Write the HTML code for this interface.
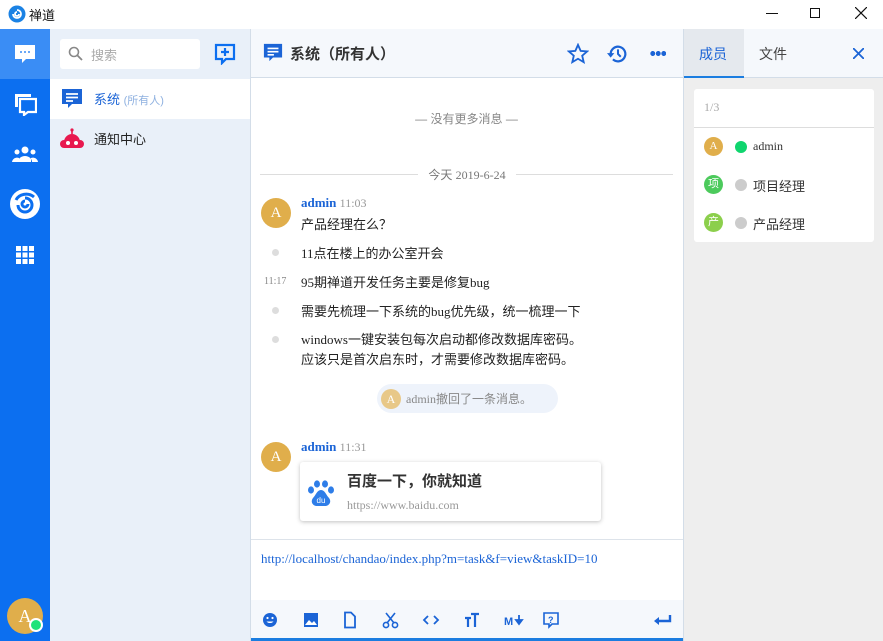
<!DOCTYPE html><html><head><meta charset="utf-8"><style>
*{margin:0;padding:0;box-sizing:border-box}
body{width:883px;height:641px;overflow:hidden;background:#fff;font-family:"Liberation Serif","Noto Sans CJK SC",serif;font-size:13px;color:#333;position:relative}
.a{position:absolute}
.cj{font-family:"Liberation Sans","Noto Sans CJK SC",sans-serif}
.sf{font-family:"Liberation Serif","Noto Sans CJK SC",serif}
.av{border-radius:50%;color:#fff;text-align:center;font-family:"Liberation Serif",serif}
</style></head><body>
<div class="a" style="left:0;top:0;width:883px;height:29px;background:#fff"></div>
<svg class="a" style="left:8px;top:5px" width="18" height="18" viewBox="0 0 18 18"><circle cx="9" cy="9" r="8.5" fill="#1b82e4"/><path d="M5 9a4 4 0 1 0 4-4M9 7a2 2 0 1 0 2 2" stroke="#fff" stroke-width="1.8" fill="none"/></svg>
<div class="a cj" style="left:29px;top:5px;font-size:13px;color:#111">禅道</div>
<div class="a" style="left:766px;top:13px;width:12px;height:1px;background:#111"></div>
<div class="a" style="left:810px;top:8px;width:10px;height:10px;border:1px solid #111"></div>
<svg class="a" style="left:855px;top:7px" width="12" height="12" viewBox="0 0 12 12"><path d="M0 0L12 12M12 0L0 12" stroke="#111" stroke-width="1.2"/></svg>
<div class="a" style="left:0;top:29px;width:50px;height:612px;background:#0c6ff0"></div>
<div class="a" style="left:0;top:29px;width:50px;height:50px;background:#3a8df5"></div>
<svg class="a" style="left:14px;top:43px" width="22" height="22" viewBox="0 0 22 22"><path d="M1 2h20v14H12l-4 4v-4H1z" fill="#fff"/><circle cx="7" cy="9" r="1" fill="#3a8df5"/><circle cx="11" cy="9" r="1" fill="#3a8df5"/><circle cx="15" cy="9" r="1" fill="#3a8df5"/></svg>
<svg class="a" style="left:13px;top:92px" width="24" height="24" viewBox="0 0 24 24"><path d="M2 2h16v3H5v10H2z" fill="#fff"/><path d="M7 7h16v13h-8l-4 3v-3H7z" fill="none" stroke="#fff" stroke-width="2.2"/></svg>
<svg class="a" style="left:12px;top:145px" width="26" height="18" viewBox="0 0 26 18"><circle cx="13" cy="5" r="3.5" fill="#fff"/><circle cx="5" cy="7" r="2.5" fill="#fff"/><circle cx="21" cy="7" r="2.5" fill="#fff"/><path d="M6 17a7 6 0 0 1 14 0zM0 17a5 5 0 0 1 7-4v4zM26 17a5 5 0 0 0-7-4v4z" fill="#fff"/></svg>
<svg class="a" style="left:10px;top:189px" width="30" height="30" viewBox="0 0 30 30"><circle cx="15" cy="15" r="15" fill="#fff"/><path d="M8 16a7 7 0 1 0 7-7M15 12a3 3 0 1 0 3 3M6 11c3-6 12-8 18-3" stroke="#0c6ff0" stroke-width="3" fill="none"/></svg>
<svg class="a" style="left:16px;top:246px" width="18" height="18" viewBox="0 0 18 18" fill="#fff"><rect x="0" y="0" width="5" height="5"/><rect x="6.5" y="0" width="5" height="5"/><rect x="13" y="0" width="5" height="5"/><rect x="0" y="6.5" width="5" height="5"/><rect x="6.5" y="6.5" width="5" height="5"/><rect x="13" y="6.5" width="5" height="5"/><rect x="0" y="13" width="5" height="5"/><rect x="6.5" y="13" width="5" height="5"/><rect x="13" y="13" width="5" height="5"/></svg>
<div class="a av" style="left:7px;top:598px;width:36px;height:36px;background:#e0ae4b;font-size:18px;line-height:36px">A</div>
<div class="a" style="left:29px;top:618px;width:14px;height:14px;border-radius:50%;background:#1ee37a;border:2px solid #fff"></div>
<div class="a" style="left:50px;top:29px;width:200px;height:612px;background:#e9f0f9"></div>
<div class="a" style="left:60px;top:39px;width:140px;height:30px;background:#fff;border-radius:3px"></div>
<svg class="a" style="left:68px;top:46px" width="15" height="15" viewBox="0 0 15 15"><circle cx="6" cy="6" r="4.5" stroke="#888" stroke-width="1.6" fill="none"/><path d="M9.5 9.5L14 14" stroke="#888" stroke-width="1.8"/></svg>
<div class="a cj" style="left:91px;top:45px;color:#aaa;font-size:13px">搜索</div>
<svg class="a" style="left:214px;top:43px" width="22" height="22" viewBox="0 0 22 22"><path d="M2 2h18v14h-8l-4 4v-4H2z" fill="none" stroke="#0c6ff0" stroke-width="2.2"/><path d="M11 5v8M7 9h8" stroke="#0c6ff0" stroke-width="2.2"/></svg>
<div class="a" style="left:50px;top:79px;width:200px;height:40px;background:#fff"></div>
<svg class="a" style="left:61px;top:88px" width="22" height="22" viewBox="0 0 22 22"><path d="M1 1h20v15H11l-4 4v-4H1z" fill="#1b64d6"/><path d="M5 6h12M5 9.5h12M5 13h7" stroke="#fff" stroke-width="1.8"/></svg>
<div class="a cj" style="left:94px;top:89px;color:#1b64d6;font-size:13px">系统 <span style="font-size:11px;color:#8fb1e0">(所有人)</span></div>
<svg class="a" style="left:60px;top:128px" width="24" height="22" viewBox="0 0 24 22"><circle cx="12" cy="2" r="1.6" fill="#e8194f"/><rect x="11.2" y="2" width="1.6" height="4" fill="#e8194f"/><path d="M4 14a8 8 0 0 1 16 0v6H4z" fill="#e8194f"/><rect x="0" y="12" width="24" height="8" rx="4" fill="#e8194f"/><circle cx="8" cy="15" r="2" fill="#fff"/><circle cx="16" cy="15" r="2" fill="#fff"/></svg>
<div class="a cj" style="left:94px;top:129px;color:#222;font-size:13px">通知中心</div>
<div class="a" style="left:250px;top:29px;width:433px;height:49px;background:#f5f8fc;border-bottom:1px solid #d3dde8;border-left:1px solid #d3dde8"></div>
<svg class="a" style="left:263px;top:43px" width="20" height="20" viewBox="0 0 22 22"><path d="M1 1h20v15H11l-4 4v-4H1z" fill="#1b64d6"/><path d="M5 6h12M5 9.5h12M5 13h7" stroke="#fff" stroke-width="1.8"/></svg>
<div class="a cj" style="left:290px;top:43px;font-size:15px;font-weight:bold;color:#333">系统（所有人）</div>
<svg class="a" style="left:567px;top:43px" width="22" height="22" viewBox="0 0 24 24"><path d="M12 2l2.9 6.6 7.1.6-5.4 4.7 1.6 7-6.2-3.7-6.2 3.7 1.6-7L2 9.2l7.1-.6z" fill="none" stroke="#1b64d6" stroke-width="2"/></svg>
<svg class="a" style="left:607px;top:43px" width="22" height="22" viewBox="0 0 24 24"><path d="M4 12a8 8 0 1 1 2.5 5.8" fill="none" stroke="#1b64d6" stroke-width="2.4"/><path d="M0 11h8l-4 5z" fill="#1b64d6"/><path d="M12 7v5l3 3" stroke="#1b64d6" stroke-width="2.2" fill="none"/></svg>
<div class="a" style="left:650px;top:51px;width:16px;height:5px;background:radial-gradient(circle,#1b64d6 2.3px,transparent 2.6px) 0 0/5.5px 5px repeat-x"></div>
<div class="a" style="left:250px;top:78px;width:1px;height:563px;background:#d3dde8"></div>
<div class="a cj" style="left:250px;top:110px;width:433px;text-align:center;color:#888;font-size:12px">— 没有更多消息 —</div>
<div class="a" style="left:260px;top:174px;width:158px;height:1px;background:#ddd"></div>
<div class="a" style="left:516px;top:174px;width:157px;height:1px;background:#ddd"></div>
<div class="a cj" style="left:418px;top:166px;width:98px;text-align:center;color:#777;font-size:12px">今天 <span style="font-family:'Liberation Serif'">2019-6-24</span></div>
<div class="a av" style="left:261px;top:198px;width:30px;height:30px;background:#e0ae4b;line-height:30px;font-size:15px">A</div>
<div class="a" style="left:301px;top:195px;color:#1b64d6;font-weight:bold;font-size:13px">admin <span style="font-weight:normal;color:#999;font-size:12px">11:03</span></div>
<div class="a sf" style="left:301px;top:214px;font-size:13px;color:#222">产品经理在么？</div>
<div class="a" style="left:272px;top:249px;width:7px;height:7px;border-radius:50%;background:#ddd"></div>
<div class="a sf" style="left:301px;top:243px;color:#222">11点在楼上的办公室开会</div>
<div class="a" style="left:264px;top:276px;font-size:10px;color:#888">11:17</div>
<div class="a sf" style="left:301px;top:272px;color:#222">95期禅道开发任务主要是修复bug</div>
<div class="a" style="left:272px;top:307px;width:7px;height:7px;border-radius:50%;background:#ddd"></div>
<div class="a sf" style="left:301px;top:301px;color:#222">需要先梳理一下系统的bug优先级，统一梳理一下</div>
<div class="a" style="left:272px;top:336px;width:7px;height:7px;border-radius:50%;background:#ddd"></div>
<div class="a sf" style="left:301px;top:330px;color:#222;line-height:20px">windows一键安装包每次启动都修改数据库密码。<br>应该只是首次启东时，才需要修改数据库密码。</div>
<div class="a" style="left:377px;top:384px;width:181px;height:29px;border-radius:15px;background:#eef3fb"></div>
<div class="a av" style="left:381px;top:389px;width:20px;height:20px;background:#e8c888;line-height:20px;font-size:12px">A</div>
<div class="a sf" style="left:406px;top:390px;color:#888;font-size:12px">admin撤回了一条消息。</div>
<div class="a av" style="left:261px;top:442px;width:30px;height:30px;background:#e0ae4b;line-height:30px;font-size:15px">A</div>
<div class="a" style="left:301px;top:439px;color:#1b64d6;font-weight:bold;font-size:13px">admin <span style="font-weight:normal;color:#999;font-size:12px">11:31</span></div>
<div class="a" style="left:300px;top:462px;width:301px;height:59px;background:#fff;border-radius:3px;box-shadow:0 1px 4px rgba(0,0,0,.25)"></div>
<svg class="a" style="left:307px;top:479px" width="28" height="28" viewBox="0 0 28 28" fill="#2e7de8"><ellipse cx="4" cy="11" rx="3" ry="3.6"/><ellipse cx="10" cy="5" rx="3" ry="3.6"/><ellipse cx="18" cy="5" rx="3" ry="3.6"/><ellipse cx="24" cy="11" rx="3" ry="3.6"/><path d="M14 11c-4 0-5 5-8 8-3 4 0 8 4 8h8c4 0 7-4 4-8-3-3-4-8-8-8z"/><text x="14" y="24" font-size="8" fill="#fff" text-anchor="middle" font-family="Liberation Sans">du</text></svg>
<div class="a cj" style="left:347px;top:470px;font-size:15px;font-weight:bold;color:#333">百度一下，你就知道</div>
<div class="a" style="left:347px;top:498px;font-size:12px;color:#999">https://www.baidu.com</div>
<div class="a" style="left:251px;top:539px;width:432px;height:1px;background:#dde3ea"></div>
<div class="a" style="left:261px;top:551px;color:#1b64d6;font-size:13px">http://localhost/chandao/index.php?m=task&amp;f=view&amp;taskID=10</div>
<div class="a" style="left:251px;top:600px;width:432px;height:39px;background:#f5f8fc"></div>
<svg class="a" style="left:262px;top:611px" width="420" height="18" viewBox="0 0 420 18" fill="#1b64d6" stroke="#1b64d6">
<circle cx="8" cy="9" r="7" stroke="none"/><circle cx="5.5" cy="7" r="1.1" fill="#fff" stroke="none"/><circle cx="10.5" cy="7" r="1.1" fill="#fff" stroke="none"/><path d="M4.5 10.5a4 3 0 0 0 7 0z" fill="#fff" stroke="none"/>
<rect x="42" y="2" width="14" height="14" stroke="none"/><path d="M43 14l4-5 3 3 2-2 3 4z" fill="#fff" stroke="none"/>
<path d="M83 1.5h6l4 4v11H83z" fill="none" stroke-width="1.8"/>
<circle cx="124" cy="14" r="2.6" fill="none" stroke-width="1.6"/><circle cx="133" cy="14" r="2.6" fill="none" stroke-width="1.6"/><path d="M125 12l8-10M132 12l-8-10" stroke-width="1.6"/>
<path d="M166 5l-4 4 4 4M172 5l4 4-4 4" fill="none" stroke-width="1.8"/>
<path d="M203 7h6M206 7v9M209 3h8M213 3v13" fill="none" stroke-width="2.2"/>
<text x="242" y="14" font-size="11" font-weight="bold" font-family="Liberation Sans" stroke="none">M</text><path d="M257 4v7M254 9l3 4 3-4z" stroke-width="1.8"/>
<path d="M282 2h14v11h-6l-3 3v-3h-5z" fill="none" stroke-width="1.6"/><text x="286" y="12" font-size="9" font-weight="bold" font-family="Liberation Sans" stroke="none">?</text>
<path d="M408 4v6H394" fill="none" stroke-width="2.4"/><path d="M392 10l5-4v8z" stroke="none"/>
</svg>
<div class="a" style="left:251px;top:638px;width:432px;height:3px;background:#1b7de0"></div>
<div class="a" style="left:683px;top:29px;width:200px;height:612px;background:#eeeeee;border-left:1px solid #d3dde8"></div>
<div class="a" style="left:684px;top:29px;width:199px;height:49px;background:#f5f8fc;border-bottom:1px solid #d3dde8"></div>
<div class="a" style="left:684px;top:29px;width:60px;height:49px;background:#e5e9ee;border-bottom:2px solid #1b7de0"></div>
<div class="a cj" style="left:699px;top:44px;color:#1b64d6;font-size:14px">成员</div>
<div class="a cj" style="left:759px;top:44px;color:#444;font-size:14px">文件</div>
<svg class="a" style="left:853px;top:48px" width="11" height="11" viewBox="0 0 11 11"><path d="M0 0L11 11M11 0L0 11" stroke="#1b64d6" stroke-width="1.8"/></svg>
<div class="a" style="left:694px;top:89px;width:180px;height:153px;background:#fff;border-radius:3px"></div>
<div class="a" style="left:694px;top:127px;width:180px;height:1px;background:#ddd"></div>
<div class="a" style="left:704px;top:100px;color:#aaa;font-size:12px">1/3</div>
<div class="a av" style="left:704px;top:137px;width:19px;height:19px;background:#e0ae4b;line-height:19px;font-size:11px">A</div>
<div class="a" style="left:735px;top:141px;width:12px;height:12px;border-radius:50%;background:#10d56e"></div>
<div class="a" style="left:753px;top:139px;font-size:12px;color:#333">admin</div>
<div class="a av cj" style="left:704px;top:175px;width:19px;height:19px;background:#4cca5c;line-height:19px;font-size:11px">项</div>
<div class="a" style="left:735px;top:179px;width:12px;height:12px;border-radius:50%;background:#ccc"></div>
<div class="a cj" style="left:753px;top:176px;font-size:13px;color:#333">项目经理</div>
<div class="a av cj" style="left:704px;top:213px;width:19px;height:19px;background:#8ccf4c;line-height:19px;font-size:11px">产</div>
<div class="a" style="left:735px;top:217px;width:12px;height:12px;border-radius:50%;background:#ccc"></div>
<div class="a cj" style="left:753px;top:214px;font-size:13px;color:#333">产品经理</div>
</body></html>
